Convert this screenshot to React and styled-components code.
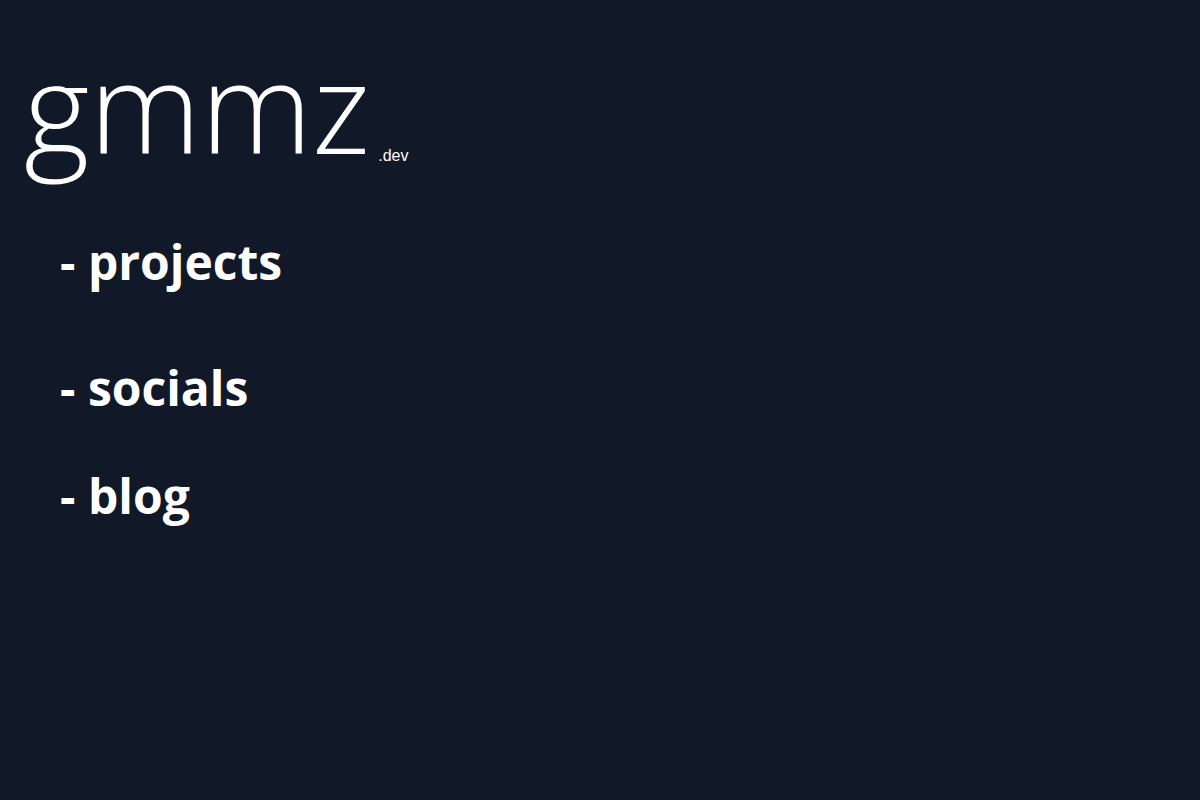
import React from 'react';
import styled, { createGlobalStyle } from 'styled-components';

const GlobalStyle = createGlobalStyle`
  html, body {
    margin: 0;
    padding: 0;
    background: #111827;
  }
  body {
    font-family: "Open Sans", "Liberation Sans", sans-serif;
    color: #ffffff;
  }
`;

const Page = styled.div`
  min-height: 800px;
  background: #111827;
  padding: 42px 0 0 24px;
  box-sizing: border-box;
`;

// Logo: big thin wordmark with a small ".dev" suffix
const Logo = styled.div`
  display: flex;
  align-items: baseline;
`;

const Wordmark = styled.span`
  font-family: "Open Sans", sans-serif;
  font-weight: 300;
  font-size: 126px;
  line-height: 1;
  letter-spacing: 0;
`;

const Tld = styled.span`
  font-family: "Liberation Sans", Arial, sans-serif;
  font-size: 16px;
  margin-left: 8px;
  transform: translateY(7px);
`;

const Nav = styled.nav`
  display: flex;
  flex-direction: column;
  padding-left: 36px;
  margin-top: 62px;
`;

const NavItem = styled.a`
  display: block;
  font-family: "Open Sans", sans-serif;
  font-weight: 700;
  font-size: 48px;
  line-height: 64px;
  color: #ffffff;
  text-decoration: none;
  margin-top: ${(p) => p.$gap || 0}px;
`;

const items = [
  { label: 'projects', gap: 0 },
  { label: 'socials', gap: 62 },
  { label: 'blog', gap: 44 },
];

export default function App() {
  return (
    <>
      <GlobalStyle />
      <Page>
        <Logo>
          <Wordmark>gmmz</Wordmark>
          <Tld>.dev</Tld>
        </Logo>
        <Nav>
          {items.map((it) => (
            <NavItem key={it.label} href="#" $gap={it.gap}>
              - {it.label}
            </NavItem>
          ))}
        </Nav>
      </Page>
    </>
  );
}
